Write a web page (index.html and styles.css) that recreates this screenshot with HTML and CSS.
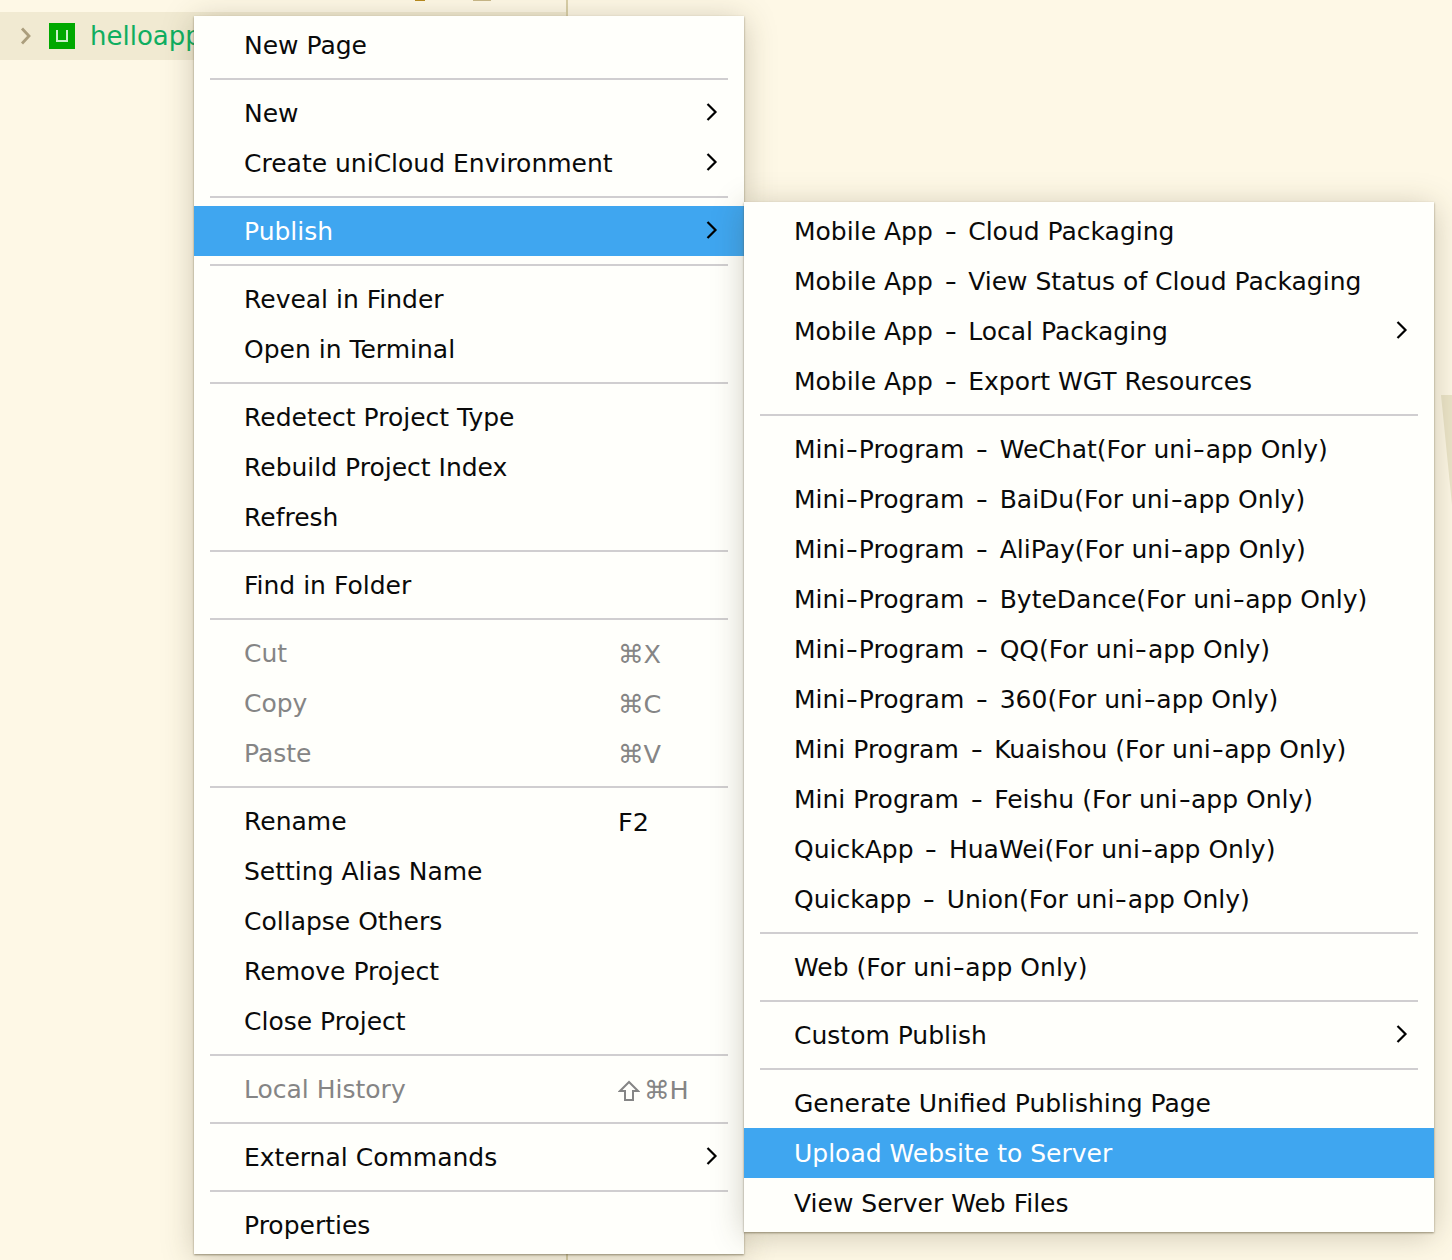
FILE: index.html
```html
<!DOCTYPE html>
<html lang="en">
<head>
    <meta charset="UTF-8">
    <title>Publish menu</title>
    <link rel="stylesheet" href="styles.css">
</head>
<body>
    <div class="side-line"></div>
    <div class="wedge"></div>
    <div class="top-bit bit-one"></div>
    <div class="top-bit bit-two"></div>
    <div class="tree-row">
        <svg class="tree-arrow" width="12" height="18" viewBox="0 0 12 18"><path d="M2 1.5l7 7.5-7 7.5" fill="none" stroke="#ab9e7d" stroke-width="2.8"/></svg>
        <svg class="app-icon" width="26" height="26" viewBox="0 0 26 26"><rect width="26" height="26" fill="#00a800"/><path d="M8 7v11h10V7" fill="none" stroke="#c9efc9" stroke-width="2"/></svg>
        <span class="app-name">helloapp</span>
    </div>

    <div class="menu main-menu">
        <div class="item">New Page</div>
        <div class="line"></div>
        <div class="item sub">New<svg class="chev" width="12" height="20" viewBox="0 0 12 20"><path d="M1.5 2l8 8-8 8" fill="none" stroke="#000" stroke-width="2.2"/></svg></div>
        <div class="item sub">Create uniCloud Environment<svg class="chev" width="12" height="20" viewBox="0 0 12 20"><path d="M1.5 2l8 8-8 8" fill="none" stroke="#000" stroke-width="2.2"/></svg></div>
        <div class="line"></div>
        <div class="item sub active">Publish<svg class="chev" width="12" height="20" viewBox="0 0 12 20"><path d="M1.5 2l8 8-8 8" fill="none" stroke="#000" stroke-width="2.2"/></svg></div>
        <div class="line"></div>
        <div class="item">Reveal in Finder</div>
        <div class="item">Open in Terminal</div>
        <div class="line"></div>
        <div class="item">Redetect Project Type</div>
        <div class="item">Rebuild Project Index</div>
        <div class="item">Refresh</div>
        <div class="line"></div>
        <div class="item">Find in Folder</div>
        <div class="line"></div>
        <div class="item off">Cut<span class="key">⌘X</span></div>
        <div class="item off">Copy<span class="key">⌘C</span></div>
        <div class="item off">Paste<span class="key">⌘V</span></div>
        <div class="line"></div>
        <div class="item">Rename<span class="key">F2</span></div>
        <div class="item">Setting Alias Name</div>
        <div class="item">Collapse Others</div>
        <div class="item">Remove Project</div>
        <div class="item">Close Project</div>
        <div class="line"></div>
        <div class="item off">Local History<span class="key"><svg class="shift" width="22" height="22" viewBox="0 0 22 22"><path d="M11 2L2 11h5v9h8v-9h5z" fill="none" stroke="#858585" stroke-width="2"/></svg>⌘H</span></div>
        <div class="line"></div>
        <div class="item sub">External Commands<svg class="chev" width="12" height="20" viewBox="0 0 12 20"><path d="M1.5 2l8 8-8 8" fill="none" stroke="#000" stroke-width="2.2"/></svg></div>
        <div class="line"></div>
        <div class="item">Properties</div>
    </div>

    <div class="menu sub-menu">
        <div class="item">Mobile App <span class="hy sep">-</span> Cloud Packaging</div>
        <div class="item">Mobile App <span class="hy sep">-</span> View Status of Cloud Packaging</div>
        <div class="item sub">Mobile App <span class="hy sep">-</span> Local Packaging<svg class="chev" width="12" height="20" viewBox="0 0 12 20"><path d="M1.5 2l8 8-8 8" fill="none" stroke="#000" stroke-width="2.2"/></svg></div>
        <div class="item">Mobile App <span class="hy sep">-</span> Export WGT Resources</div>
        <div class="line"></div>
        <div class="item">Mini<span class="hy">-</span>Program <span class="hy sep">-</span> WeChat(For uni<span class="hy">-</span>app Only)</div>
        <div class="item">Mini<span class="hy">-</span>Program <span class="hy sep">-</span> BaiDu(For uni<span class="hy">-</span>app Only)</div>
        <div class="item">Mini<span class="hy">-</span>Program <span class="hy sep">-</span> AliPay(For uni<span class="hy">-</span>app Only)</div>
        <div class="item">Mini<span class="hy">-</span>Program <span class="hy sep">-</span> ByteDance(For uni<span class="hy">-</span>app Only)</div>
        <div class="item">Mini<span class="hy">-</span>Program <span class="hy sep">-</span> QQ(For uni<span class="hy">-</span>app Only)</div>
        <div class="item">Mini<span class="hy">-</span>Program <span class="hy sep">-</span> 360(For uni<span class="hy">-</span>app Only)</div>
        <div class="item">Mini Program <span class="hy sep">-</span> Kuaishou (For uni<span class="hy">-</span>app Only)</div>
        <div class="item">Mini Program <span class="hy sep">-</span> Feishu (For uni<span class="hy">-</span>app Only)</div>
        <div class="item">QuickApp <span class="hy sep">-</span> HuaWei(For uni<span class="hy">-</span>app Only)</div>
        <div class="item">Quickapp <span class="hy sep">-</span> Union(For uni<span class="hy">-</span>app Only)</div>
        <div class="line"></div>
        <div class="item">Web (For uni<span class="hy">-</span>app Only)</div>
        <div class="line"></div>
        <div class="item sub">Custom Publish<svg class="chev" width="12" height="20" viewBox="0 0 12 20"><path d="M1.5 2l8 8-8 8" fill="none" stroke="#000" stroke-width="2.2"/></svg></div>
        <div class="line"></div>
        <div class="item">Generate Unified Publishing Page</div>
        <div class="item active">Upload Website to Server</div>
        <div class="item">View Server Web Files</div>
    </div>
</body>
</html>
```
FILE: styles.css
```css
html, body {
    margin: 0;
    height: 100%;
}
body {
    background: #fef8e6;
    font-family: "DejaVu Sans", "Liberation Sans", sans-serif;
    overflow: hidden;
    position: relative;
}
.side-line {
    position: absolute;
    left: 566px;
    top: 0;
    bottom: 0;
    width: 2px;
    background: #d9cfa8;
}
.wedge {
    position: absolute;
    left: 1441px;
    top: 395px;
    width: 11px;
    height: 110px;
    background: #ece5c9;
    clip-path: polygon(0 0, 100% 0, 100% 100%);
}
.top-bit {
    position: absolute;
    top: 0;
    height: 1px;
}
.bit-one {
    left: 415px;
    width: 10px;
    background: #b98a1e;
}
.bit-two {
    left: 473px;
    width: 18px;
    background: #c9b98a;
}
.tree-row {
    display: flex;
    align-items: center;
    height: 48px;
    width: 566px;
    margin-top: 12px;
    padding-left: 20px;
    box-sizing: border-box;
    background: #f1ead2;
    overflow: hidden;
    position: relative;
}
.tree-arrow {
    margin-right: 17px;
}
.app-name {
    margin-left: 15px;
    font-size: 26px;
    color: #0fae60;
}
.menu {
    position: absolute;
    background: #fffffb;
    box-shadow: 0 1px 2px rgba(90, 80, 50, 0.6), 0 4px 30px rgba(70, 60, 30, 0.26);
    font-size: 25px;
    color: #0a0a0a;
    padding-top: 4px;
    box-sizing: border-box;
}
.main-menu {
    left: 194px;
    top: 16px;
    width: 550px;
    height: 1238px;
}
.sub-menu {
    left: 744px;
    top: 202px;
    width: 690px;
    height: 1030px;
}
.item {
    height: 50px;
    line-height: 52px;
    padding-left: 50px;
    position: relative;
    white-space: nowrap;
}
.item.active {
    background: #3fa6f0;
    color: #fff;
}
.item.off {
    color: #858585;
}
.line {
    height: 2px;
    margin: 8px 16px;
    background: #d0ced0;
}
.key {
    position: absolute;
    left: 424px;
    top: 0;
    font-size: 25.5px;
}
.shift {
    vertical-align: -3px;
    margin-right: 4px;
}
.chev {
    position: absolute;
    right: 26px;
    top: 14px;
}
/* hyphens are long in the original menu font */
.hy {
    display: inline-block;
    width: 13.5px;
    text-align: center;
    transform: scaleX(1.35);
}
.hy.sep {
    margin: 0 3px;
}
```
